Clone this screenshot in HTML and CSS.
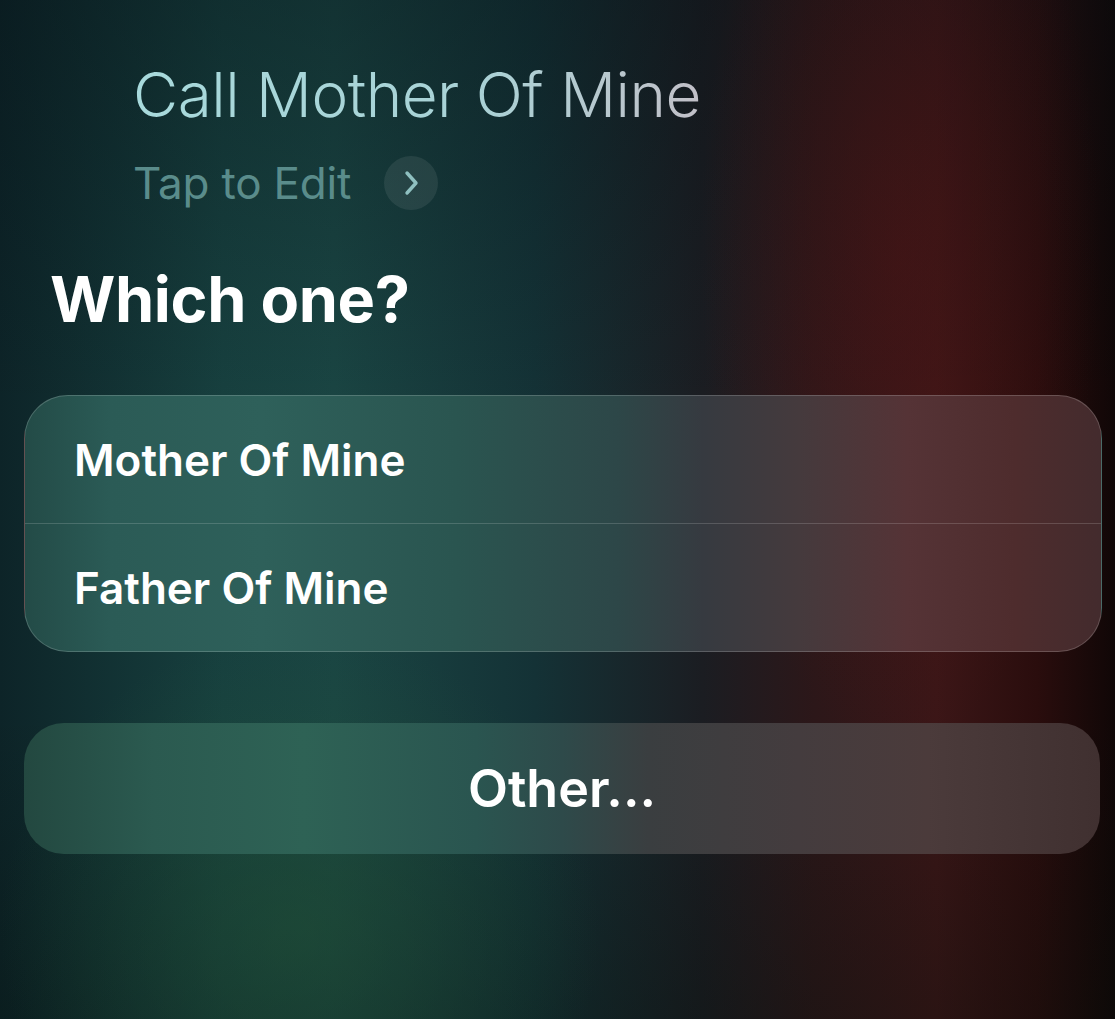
FILE: index.html
```html
<html>
    <head>
        <title>Siri</title>
        <link rel="stylesheet" href="styles.css">
    </head>
    <body>
        <div class="screen">
            <div class="query">
                <div class="queryText">Call Mother Of Mine</div>
                <div class="editRow">
                    <span class="editLabel">Tap to Edit</span>
                    <span class="editButton">
                        <svg width="22" height="30" viewBox="0 0 22 30">
                            <path d="M7 5 L16 15 L7 25" fill="none" stroke="#8fc0c0" stroke-width="3.4" stroke-linecap="round" stroke-linejoin="round"/>
                        </svg>
                    </span>
                </div>
            </div>

            <h1 class="question">Which one?</h1>

            <div class="choiceList">
                <div class="choice">Mother Of Mine</div>
                <div class="choice">Father Of Mine</div>
            </div>

            <div class="otherButton">Other...</div>
        </div>
    </body>
</html>
```

FILE: styles.css
```css
body
{
    margin: 0;
    padding: 0;
    font-family: Inter, "Noto Sans", sans-serif;
}
.screen
{
    width: 1115px;
    height: 1019px;
    overflow: hidden;
    box-sizing: border-box;
    padding: 60px 15px 0 24px;
    display: flex;
    flex-direction: column;
    background:
        radial-gradient(ellipse 300px 300px at 300px 930px, rgba(35, 85, 55, 0.5), transparent),
        radial-gradient(ellipse 200px 500px at 900px 250px, rgba(80, 20, 20, 0.45), transparent),
        linear-gradient(to bottom, rgba(5, 15, 20, 0.35), transparent 40%, transparent 70%, rgba(5, 15, 10, 0.3)),
        linear-gradient(to right, #0d2428 0%, #17403f 20%, #1a4543 30%, #143236 48%, #1b1d22 63%, #2c1719 73%, #3b1617 84%, #2a0d0d 93%, #100707 100%);
}
.query
{
    padding-left: 109px;
}
.queryText
{
    font-size: 62px;
    font-weight: 300;
    line-height: 70px;
    letter-spacing: -0.5px;
    color: #a6d6d8;
    background: linear-gradient(to right, #a8dadc, #a9d2d6 60%, #c2c0c8);
    -webkit-background-clip: text;
    background-clip: text;
    -webkit-text-fill-color: transparent;
    width: fit-content;
}
.editRow
{
    display: flex;
    align-items: center;
    gap: 33px;
    margin-top: 26px;
}
.editLabel
{
    font-size: 44px;
    font-weight: 400;
    color: #5a8c8b;
    letter-spacing: -0.2px;
}
.editButton
{
    width: 54px;
    height: 54px;
    border-radius: 50%;
    background-color: rgba(255, 255, 255, 0.08);
    display: flex;
    align-items: center;
    justify-content: center;
}
.question
{
    margin: 49px 0 0 26px;
    font-size: 63px;
    font-weight: 700;
    line-height: 80px;
    color: #ffffff;
    letter-spacing: -0.4px;
}
.choiceList
{
    margin-top: 56px;
    width: 1076px;
    border: 1px solid rgba(255, 255, 255, 0.18);
    border-radius: 44px;
    overflow: hidden;
    background: linear-gradient(to right, #234b47 0%, #2b5b56 8%, #2e605a 22%, #2a5550 40%, #2d4748 55%, #363a40 63%, #453a3d 72%, #553336 82%, #4e2c2d 92%, #432b2d 100%);
}
.choice
{
    height: 127px;
    display: flex;
    align-items: center;
    padding-left: 49px;
    font-size: 44px;
    font-weight: 600;
    color: #ffffff;
}
.choice + .choice
{
    border-top: 1px solid rgba(255, 255, 255, 0.16);
}
.otherButton
{
    margin-top: 71px;
    width: 1076px;
    height: 131px;
    border-radius: 40px;
    display: flex;
    align-items: center;
    justify-content: center;
    font-size: 52px;
    font-weight: 600;
    color: #ffffff;
    background: linear-gradient(to right, #234840 0%, #2b5a50 12%, #2e6255 26%, #2a5550 42%, #2e4a4a 50%, #3a3e40 58%, #443c3e 72%, #4b3b3b 84%, #403030 100%);
}
```
